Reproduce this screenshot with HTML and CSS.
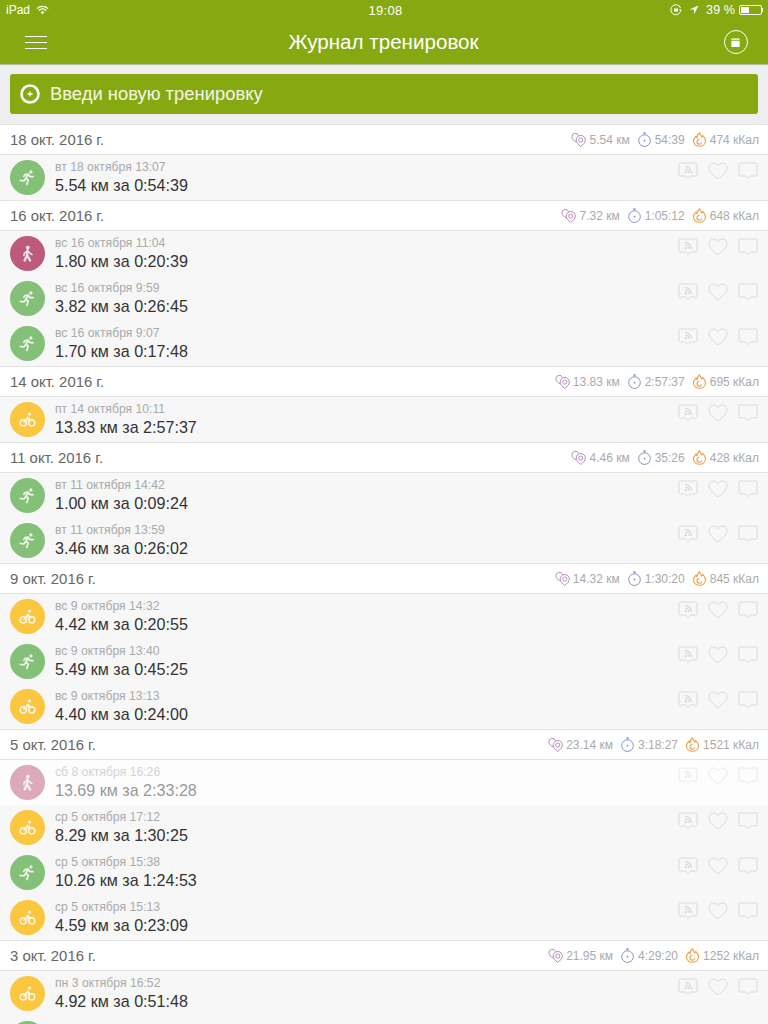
FILE: index.html
```html
<!DOCTYPE html>
<html lang="ru">
<head>
  <meta charset="UTF-8">
  <title>Журнал тренировок</title>
  <link rel="stylesheet" href="styles.css">
</head>
<body>

  <!-- Shared icons -->
  <svg class="sprite" xmlns="http://www.w3.org/2000/svg">
    <symbol id="i-run" viewBox="0 0 20 20">
      <circle cx="14" cy="3.400" r="1.900" fill="#fff"/>
      <path d="M1.500 13.500l4.500.4 2.200-3 2.600 2.200-1.600 5.200" fill="none" stroke="#fff" stroke-width="2" stroke-linecap="round" stroke-linejoin="round"/>
      <path d="M8.200 11l2.400-5-3.200.4-1.600 2.200M10.600 6l2.200 2.800 3.600.2" fill="none" stroke="#fff" stroke-width="2.200" stroke-linecap="round" stroke-linejoin="round"/>
    </symbol>
    <symbol id="i-walk" viewBox="0 0 20 20">
      <circle cx="10.400" cy="3" r="2.200" fill="#fff"/>
      <path d="M10 6.500L9.600 12M9.600 12l-3 6.200M9.600 12l3.400 6.200" fill="none" stroke="#fff" stroke-width="2.800" stroke-linecap="round" stroke-linejoin="round"/>
      <path d="M10 6.800L6.200 9.800l-.4 2.600M10 6.800l3.400 3.200 1.800 1.200" fill="none" stroke="#fff" stroke-width="1.800" stroke-linecap="round" stroke-linejoin="round"/>
    </symbol>
    <symbol id="i-bike" viewBox="0 0 20 20">
      <circle cx="12.400" cy="3.600" r="1.900" fill="#fff"/>
      <circle cx="5" cy="14" r="3.600" fill="none" stroke="#fff" stroke-width="1.700"/>
      <circle cx="15" cy="14" r="3.600" fill="none" stroke="#fff" stroke-width="1.700"/>
      <path d="M6 13l4.400-5.400 3 2.800h2.800M10.400 7.600l1.200 6" fill="none" stroke="#fff" stroke-width="2" stroke-linecap="round" stroke-linejoin="round"/>
    </symbol>
    <symbol id="i-pin" viewBox="0 0 16 16">
      <g fill="none" stroke="#b184bd" stroke-width="1">
        <path d="M5.600 10.400C3 9.600 1 7.600 1 5a3.600 3.600 0 0 1 7-1.200"/>
        <path d="M10.400 15.400c-2.600-2-4.900-4.200-4.900-6.800a4.900 4.900 0 0 1 9.800 0c0 2.600-2.300 4.800-4.900 6.800z"/>
        <circle cx="10.400" cy="8.600" r="2.200"/>
      </g>
    </symbol>
    <symbol id="i-clock" viewBox="0 0 16 16">
      <g fill="none" stroke="#7f8cc4" stroke-width="1">
        <circle cx="8" cy="9.200" r="6.200"/>
        <path d="M8 3V1M6.500 1h3"/>
      </g>
      <circle cx="8" cy="9.200" r=".9" fill="#7f8cc4"/>
    </symbol>
    <symbol id="i-flame" viewBox="0 0 16 16">
      <g fill="none" stroke="#eda24a" stroke-width="1.200" stroke-linejoin="round">
        <path d="M8 .8c.6 2.400 2 2.800 2.400 4.600.8-.4 1-1 1-1.800 1.800 1.600 3 3.600 3 6 0 3.400-2.800 5.600-6.400 5.600S1.600 13 1.600 9.600c0-2.400 1.400-3.800 2.600-5.200.2 1 .6 1.400 1.200 1.800C5.200 4 6.400 2.200 8 .8z"/>
        <path d="M10.400 11.200A2.600 2.600 0 1 1 8 7.800"/>
      </g>
    </symbol>
    <symbol id="i-share" viewBox="0 0 20 18">
      <path d="M2.500 1h15A1.500 1.500 0 0 1 19 2.500v10a1.500 1.500 0 0 1-1.500 1.500h-5L10 16.500 7.500 14h-5A1.500 1.500 0 0 1 1 12.500v-10A1.500 1.500 0 0 1 2.500 1z" fill="none" stroke="#dadada"/>
      <path d="M7 4.500a6.500 6.500 0 0 1 6.500 6.500M7 7a4 4 0 0 1 4 4" fill="none" stroke="#d4d4d4" stroke-width="1.200"/>
      <circle cx="7.800" cy="10.200" r="1.100" fill="#d4d4d4"/>
    </symbol>
    <symbol id="i-heart" viewBox="0 0 20 18">
      <path d="M10 16.800C5.500 13.200 1 10 1 5.800 1 3 3.200 1 5.600 1 7.500 1 9 2 10 3.700 11 2 12.500 1 14.400 1 16.800 1 19 3 19 5.800c0 4.200-4.500 7.400-9 11z" fill="none" stroke="#dadada"/>
    </symbol>
    <symbol id="i-comment" viewBox="0 0 20 18">
      <path d="M2.500 1h15A1.500 1.500 0 0 1 19 2.500v10a1.500 1.500 0 0 1-1.500 1.500h-5L10 16.500 7.500 14h-5A1.500 1.500 0 0 1 1 12.500v-10A1.500 1.500 0 0 1 2.500 1z" fill="none" stroke="#dadada"/>
    </symbol>
  </svg>

  <header class="topbar">
    <div class="statusbar">
      <div class="status-left">
        <span>iPad</span>
        <svg class="wifi" viewBox="0 0 14 10"><path d="M1 3.500a8.500 8.500 0 0 1 12 0M3 5.500a5.600 5.600 0 0 1 8 0" fill="none" stroke="#fff" stroke-width="1.300"/><path d="M5 7.300a2.800 2.800 0 0 1 4 0L7 9.500z" fill="#fff"/></svg>
      </div>
      <div class="status-time">19:08</div>
      <div class="status-right">
        <svg class="lock" viewBox="0 0 12 12"><path d="M10.500 7.500A5 5 0 1 1 10.500 4" fill="none" stroke="#fff"/><path d="M9 5.500h3L10.500 7.500z" fill="#fff"/><rect x="4" y="4.500" width="4" height="3" fill="#fff"/></svg>
        <svg class="arrow" viewBox="0 0 12 12"><path d="M11.500.5L.5 5.500h5.500v5.500z" fill="#fff"/></svg>
        <span>39 %</span>
        <div class="battery"><div class="battery-level"></div></div>
        <div class="battery-nub"></div>
      </div>
    </div>
    <div class="navbar">
      <button class="burger"><span></span><span></span><span></span></button>
      <h1>Журнал тренировок</h1>
      <button class="calendar">
        <svg viewBox="0 0 12 12"><path d="M1.500 1.500h9v1.500h-9zM1.500 4h9v7h-9z" fill="#fff"/></svg>
      </button>
    </div>
  </header>

  <div class="new-wrap">
    <button class="new-btn">
      <svg viewBox="0 0 20 20"><circle cx="10" cy="10" r="8.500" fill="none" stroke="#fff" stroke-width="2.600"/><path d="M10 7.500v5M7.500 10h5" stroke="#fff" stroke-width="1.300"/></svg>
      Введи новую тренировку
    </button>
  </div>

  <main class="journal">

    <section>
      <div class="day">
        <span class="day-title">18 окт. 2016 г.</span>
        <div class="stats">
          <svg class="stat-icon"><use href="#i-pin"/></svg><span class="stat-text">5.54 км</span>
          <svg class="stat-icon"><use href="#i-clock"/></svg><span class="stat-text">54:39</span>
          <svg class="stat-icon"><use href="#i-flame"/></svg><span class="stat-text">474 кКал</span>
        </div>
      </div>
      <div class="row">
        <div class="badge run"><svg><use href="#i-run"/></svg></div>
        <div class="info"><div class="when">вт 18 октября 13:07</div><div class="what">5.54 км за 0:54:39</div></div>
        <div class="actions"><svg><use href="#i-share"/></svg><svg><use href="#i-heart"/></svg><svg><use href="#i-comment"/></svg></div>
      </div>
    </section>

    <section>
      <div class="day">
        <span class="day-title">16 окт. 2016 г.</span>
        <div class="stats">
          <svg class="stat-icon"><use href="#i-pin"/></svg><span class="stat-text">7.32 км</span>
          <svg class="stat-icon"><use href="#i-clock"/></svg><span class="stat-text">1:05:12</span>
          <svg class="stat-icon"><use href="#i-flame"/></svg><span class="stat-text">648 кКал</span>
        </div>
      </div>
      <div class="row">
        <div class="badge walk"><svg><use href="#i-walk"/></svg></div>
        <div class="info"><div class="when">вс 16 октября 11:04</div><div class="what">1.80 км за 0:20:39</div></div>
        <div class="actions"><svg><use href="#i-share"/></svg><svg><use href="#i-heart"/></svg><svg><use href="#i-comment"/></svg></div>
      </div>
      <div class="row">
        <div class="badge run"><svg><use href="#i-run"/></svg></div>
        <div class="info"><div class="when">вс 16 октября 9:59</div><div class="what">3.82 км за 0:26:45</div></div>
        <div class="actions"><svg><use href="#i-share"/></svg><svg><use href="#i-heart"/></svg><svg><use href="#i-comment"/></svg></div>
      </div>
      <div class="row">
        <div class="badge run"><svg><use href="#i-run"/></svg></div>
        <div class="info"><div class="when">вс 16 октября 9:07</div><div class="what">1.70 км за 0:17:48</div></div>
        <div class="actions"><svg><use href="#i-share"/></svg><svg><use href="#i-heart"/></svg><svg><use href="#i-comment"/></svg></div>
      </div>
    </section>

    <section>
      <div class="day">
        <span class="day-title">14 окт. 2016 г.</span>
        <div class="stats">
          <svg class="stat-icon"><use href="#i-pin"/></svg><span class="stat-text">13.83 км</span>
          <svg class="stat-icon"><use href="#i-clock"/></svg><span class="stat-text">2:57:37</span>
          <svg class="stat-icon"><use href="#i-flame"/></svg><span class="stat-text">695 кКал</span>
        </div>
      </div>
      <div class="row">
        <div class="badge bike"><svg><use href="#i-bike"/></svg></div>
        <div class="info"><div class="when">пт 14 октября 10:11</div><div class="what">13.83 км за 2:57:37</div></div>
        <div class="actions"><svg><use href="#i-share"/></svg><svg><use href="#i-heart"/></svg><svg><use href="#i-comment"/></svg></div>
      </div>
    </section>

    <section>
      <div class="day">
        <span class="day-title">11 окт. 2016 г.</span>
        <div class="stats">
          <svg class="stat-icon"><use href="#i-pin"/></svg><span class="stat-text">4.46 км</span>
          <svg class="stat-icon"><use href="#i-clock"/></svg><span class="stat-text">35:26</span>
          <svg class="stat-icon"><use href="#i-flame"/></svg><span class="stat-text">428 кКал</span>
        </div>
      </div>
      <div class="row">
        <div class="badge run"><svg><use href="#i-run"/></svg></div>
        <div class="info"><div class="when">вт 11 октября 14:42</div><div class="what">1.00 км за 0:09:24</div></div>
        <div class="actions"><svg><use href="#i-share"/></svg><svg><use href="#i-heart"/></svg><svg><use href="#i-comment"/></svg></div>
      </div>
      <div class="row">
        <div class="badge run"><svg><use href="#i-run"/></svg></div>
        <div class="info"><div class="when">вт 11 октября 13:59</div><div class="what">3.46 км за 0:26:02</div></div>
        <div class="actions"><svg><use href="#i-share"/></svg><svg><use href="#i-heart"/></svg><svg><use href="#i-comment"/></svg></div>
      </div>
    </section>

    <section>
      <div class="day">
        <span class="day-title">9 окт. 2016 г.</span>
        <div class="stats">
          <svg class="stat-icon"><use href="#i-pin"/></svg><span class="stat-text">14.32 км</span>
          <svg class="stat-icon"><use href="#i-clock"/></svg><span class="stat-text">1:30:20</span>
          <svg class="stat-icon"><use href="#i-flame"/></svg><span class="stat-text">845 кКал</span>
        </div>
      </div>
      <div class="row">
        <div class="badge bike"><svg><use href="#i-bike"/></svg></div>
        <div class="info"><div class="when">вс 9 октября 14:32</div><div class="what">4.42 км за 0:20:55</div></div>
        <div class="actions"><svg><use href="#i-share"/></svg><svg><use href="#i-heart"/></svg><svg><use href="#i-comment"/></svg></div>
      </div>
      <div class="row">
        <div class="badge run"><svg><use href="#i-run"/></svg></div>
        <div class="info"><div class="when">вс 9 октября 13:40</div><div class="what">5.49 км за 0:45:25</div></div>
        <div class="actions"><svg><use href="#i-share"/></svg><svg><use href="#i-heart"/></svg><svg><use href="#i-comment"/></svg></div>
      </div>
      <div class="row">
        <div class="badge bike"><svg><use href="#i-bike"/></svg></div>
        <div class="info"><div class="when">вс 9 октября 13:13</div><div class="what">4.40 км за 0:24:00</div></div>
        <div class="actions"><svg><use href="#i-share"/></svg><svg><use href="#i-heart"/></svg><svg><use href="#i-comment"/></svg></div>
      </div>
    </section>

    <section>
      <div class="day">
        <span class="day-title">5 окт. 2016 г.</span>
        <div class="stats">
          <svg class="stat-icon"><use href="#i-pin"/></svg><span class="stat-text">23.14 км</span>
          <svg class="stat-icon"><use href="#i-clock"/></svg><span class="stat-text">3:18:27</span>
          <svg class="stat-icon"><use href="#i-flame"/></svg><span class="stat-text">1521 кКал</span>
        </div>
      </div>
      <!-- row is mid-animation in the list, so it is washed out -->
      <div class="row row-fading">
        <div class="badge walk"><svg><use href="#i-walk"/></svg></div>
        <div class="info"><div class="when">сб 8 октября 16:26</div><div class="what">13.69 км за 2:33:28</div></div>
        <div class="actions"><svg><use href="#i-share"/></svg><svg><use href="#i-heart"/></svg><svg><use href="#i-comment"/></svg></div>
      </div>
      <div class="row">
        <div class="badge bike"><svg><use href="#i-bike"/></svg></div>
        <div class="info"><div class="when">ср 5 октября 17:12</div><div class="what">8.29 км за 1:30:25</div></div>
        <div class="actions"><svg><use href="#i-share"/></svg><svg><use href="#i-heart"/></svg><svg><use href="#i-comment"/></svg></div>
      </div>
      <div class="row">
        <div class="badge run"><svg><use href="#i-run"/></svg></div>
        <div class="info"><div class="when">ср 5 октября 15:38</div><div class="what">10.26 км за 1:24:53</div></div>
        <div class="actions"><svg><use href="#i-share"/></svg><svg><use href="#i-heart"/></svg><svg><use href="#i-comment"/></svg></div>
      </div>
      <div class="row">
        <div class="badge bike"><svg><use href="#i-bike"/></svg></div>
        <div class="info"><div class="when">ср 5 октября 15:13</div><div class="what">4.59 км за 0:23:09</div></div>
        <div class="actions"><svg><use href="#i-share"/></svg><svg><use href="#i-heart"/></svg><svg><use href="#i-comment"/></svg></div>
      </div>
    </section>

    <section>
      <div class="day">
        <span class="day-title">3 окт. 2016 г.</span>
        <div class="stats">
          <svg class="stat-icon"><use href="#i-pin"/></svg><span class="stat-text">21.95 км</span>
          <svg class="stat-icon"><use href="#i-clock"/></svg><span class="stat-text">4:29:20</span>
          <svg class="stat-icon"><use href="#i-flame"/></svg><span class="stat-text">1252 кКал</span>
        </div>
      </div>
      <div class="row">
        <div class="badge bike"><svg><use href="#i-bike"/></svg></div>
        <div class="info"><div class="when">пн 3 октября 16:52</div><div class="what">4.92 км за 0:51:48</div></div>
        <div class="actions"><svg><use href="#i-share"/></svg><svg><use href="#i-heart"/></svg><svg><use href="#i-comment"/></svg></div>
      </div>
      <div class="row">
        <div class="badge run"><svg><use href="#i-run"/></svg></div>
      </div>
    </section>

  </main>

</body>
</html>
```

FILE: styles.css
```css
html, body {
  height: 1024px;
  overflow: hidden;
}

body {
  margin: 0;
  font-family: "Liberation Sans", Arial, sans-serif;
  background: #efefef;
  color: #333;
}

.sprite {
  display: none;
}

/* Top green bar */
.topbar {
  background: #86a912;
  color: white;
  height: 64px;
  border-bottom: 1px solid #b3bda0;
}

.statusbar {
  height: 20px;
  padding: 0 5px 0 6px;
  display: grid;
  grid-template-columns: 1fr auto 1fr;
  align-items: center;
  font-size: 12px;
}

.status-left,
.status-right {
  display: flex;
  align-items: center;
}

.status-right {
  justify-content: flex-end;
}

.wifi {
  width: 13px;
  height: 10px;
  margin-left: 6px;
}

.status-time {
  font-size: 13px;
  letter-spacing: 0.3px;
  margin-left: 2px;
}

.status-right span {
  font-size: 12.5px;
  margin-left: 7px;
  letter-spacing: 0.1px;
}

.lock {
  width: 12px;
  height: 12px;
}

.arrow {
  width: 10px;
  height: 10px;
  margin-left: 7px;
}

.battery {
  width: 23px;
  height: 10px;
  margin-left: 4px;
  border: 1px solid white;
  border-radius: 2px;
  padding: 1px;
  box-sizing: border-box;
}

.battery-level {
  width: 8px;
  height: 6px;
  background: white;
}

.battery-nub {
  width: 1px;
  height: 4px;
  background: white;
}

.navbar {
  height: 44px;
  padding: 0 20px 0 25px;
  display: flex;
  align-items: center;
  justify-content: space-between;
}

.navbar h1 {
  margin: 0 4px 0 0;
  font-size: 20.6px;
  font-weight: normal;
}

.burger {
  width: 22px;
  height: 13px;
  padding: 0;
  border: none;
  background: none;
  display: flex;
  flex-direction: column;
  justify-content: space-between;
}

.burger span {
  display: block;
  height: 1px;
  background: white;
}

.calendar {
  width: 24px;
  height: 24px;
  padding: 0;
  border: 1px solid white;
  border-radius: 50%;
  background: none;
  display: flex;
  align-items: center;
  justify-content: center;
}

.calendar svg {
  width: 11px;
  height: 11px;
}

/* New workout button */
.new-wrap {
  padding: 9px 10px 10px;
}

.new-btn {
  width: 100%;
  height: 40px;
  padding: 0 10px;
  border: none;
  border-radius: 3px;
  background: #86a912;
  color: #f4f7e6;
  font-family: inherit;
  font-size: 18.4px;
  display: flex;
  align-items: center;
  gap: 10px;
}

.new-btn svg {
  width: 20px;
  height: 20px;
}

/* Journal list */
.day {
  height: 29px;
  padding: 0 9px 0 10px;
  background: white;
  border-top: 1px solid #e2e2e2;
  border-bottom: 1px solid #e2e2e2;
  display: flex;
  align-items: center;
  justify-content: space-between;
}

.day-title {
  font-size: 14.9px;
  color: #666;
}

.stats {
  display: flex;
  align-items: center;
}

.stat-icon {
  width: 15px;
  height: 15px;
  margin-left: 7px;
}

.stat-text {
  font-size: 12px;
  color: #aaa;
  margin-left: 3px;
}

.row {
  height: 45px;
  padding: 0 10px;
  box-sizing: border-box;
  background: #f7f7f7;
  display: flex;
  align-items: center;
  gap: 10px;
}

.row-fading {
  background: #fdfdfd;
}

.row-fading > * {
  opacity: 0.5;
}

.badge {
  width: 35px;
  height: 35px;
  flex: none;
  border-radius: 50%;
  display: flex;
  align-items: center;
  justify-content: center;
}

.badge svg {
  width: 17px;
  height: 17px;
  opacity: 0.85;
}

.run { background: #85c078; }
.walk { background: #bd5a7c; }
.bike { background: #fbc640; }

.info {
  flex: 1;
}

.when {
  font-size: 12.2px;
  color: #aaa;
  margin-bottom: 2px;
}

.what {
  font-size: 16.1px;
  color: #333;
}

.actions {
  align-self: flex-start;
  margin-top: 7px;
  display: flex;
  gap: 10px;
}

.actions svg {
  width: 20px;
  height: 18px;
}
```
